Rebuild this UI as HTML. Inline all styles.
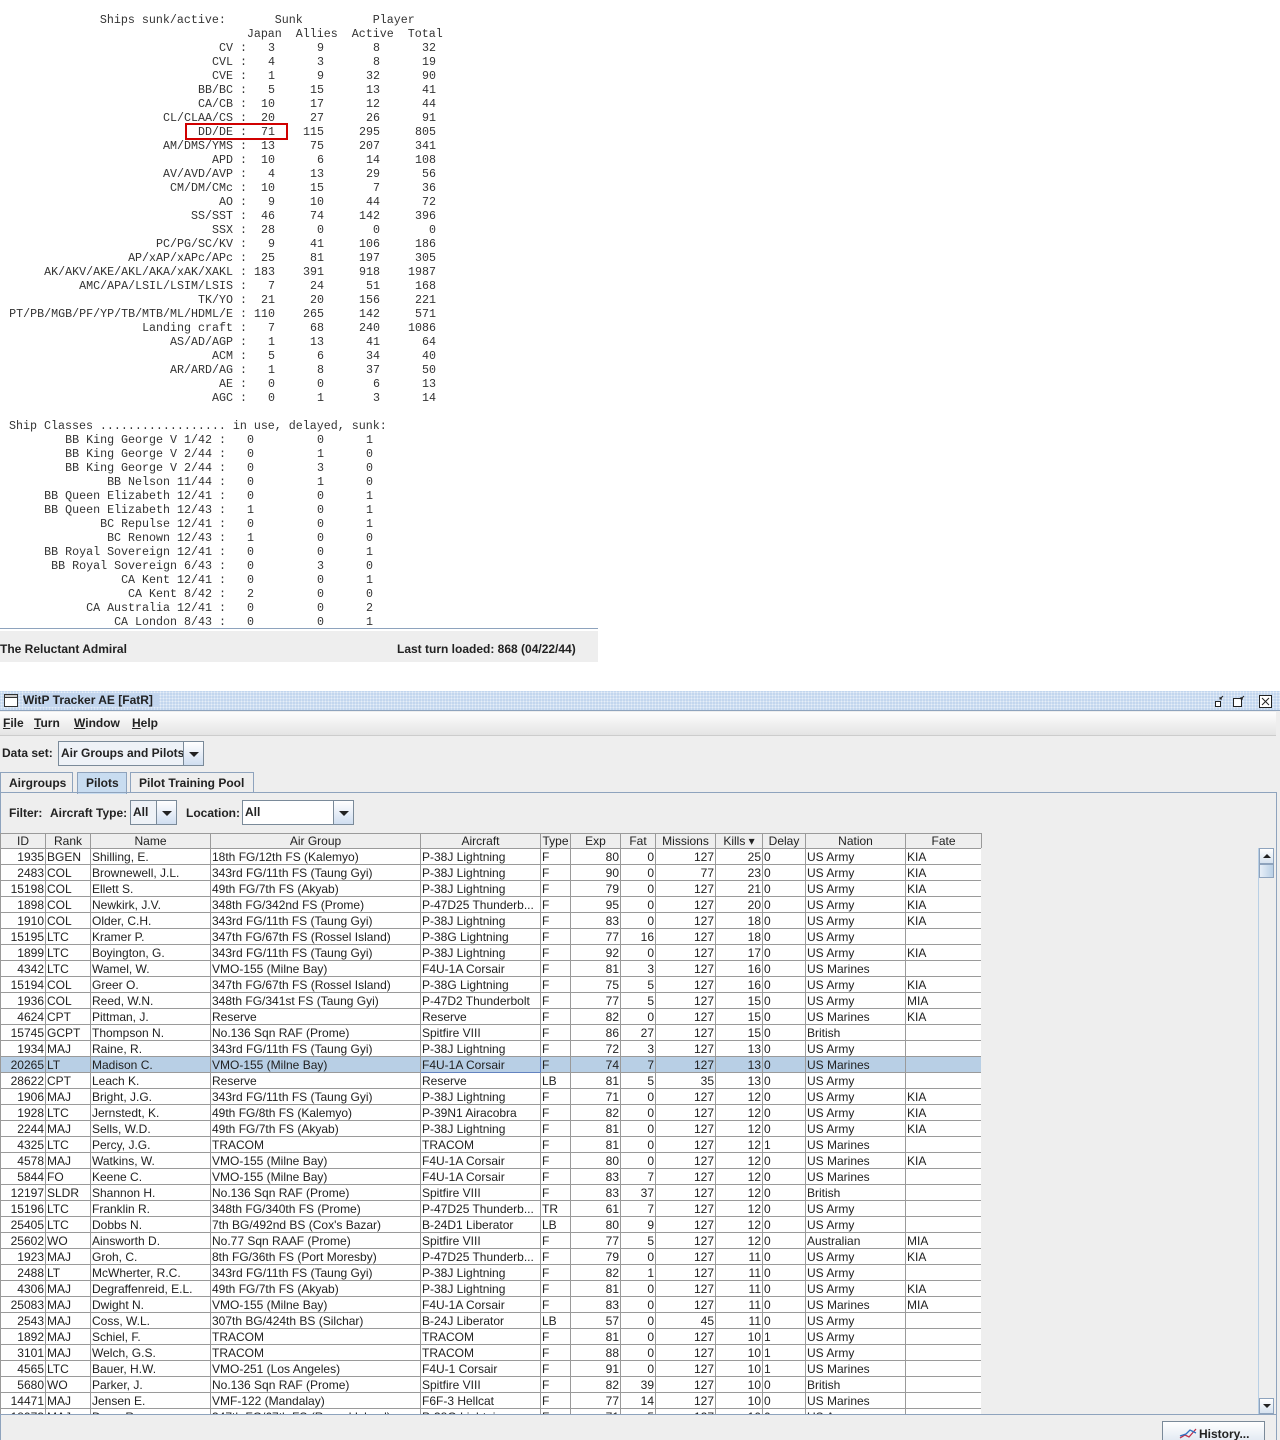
<!DOCTYPE html>
<html><head><meta charset="utf-8">
<style>
*{margin:0;padding:0;box-sizing:border-box}
html,body{width:1280px;height:1440px;overflow:hidden;background:#fff;position:relative}
.mono{font-family:"Liberation Mono",monospace;font-size:11.67px;color:#333;line-height:14px}
#rep{position:absolute;left:9px;top:13px;width:589px;height:615px;overflow:hidden}
.r{height:14px;display:flex;white-space:pre}
.r span{display:block;text-align:right;white-space:pre}
.l{width:224px}.c{width:21px}.j{width:21px}.a{width:49px}.v{width:56px}.t{width:56px}
.l2{width:203px}.c2{width:14px}.n1{width:28px}.n2{width:70px}.n3{width:49px}
#redbox{position:absolute;left:185px;top:123px;width:103px;height:17px;border:2px solid #d00000}
.sf{font-family:"Liberation Sans",Arial,sans-serif}
#status{position:absolute;left:0;top:628px;width:598px;height:34px;background:#eeeeee;border-top:1px solid #8ea3bd;box-shadow:inset 0 2px 0 #fff}
#status b{position:absolute;top:13px;font-size:12px;color:#222}
#win{position:absolute;left:0;top:691px;width:1280px;height:749px;background:#eeeeee}
#title{position:absolute;left:0;top:0;width:1280px;height:20px;border-bottom:1px solid #8ea3bd;
background-color:#c3d6ee;background-image:radial-gradient(#e6eef8 0.8px,transparent 1px);background-size:3px 3px}
#title .tx{position:absolute;left:23px;top:2px;font-weight:bold;font-size:12px;color:#222;background:#c3d6ee;padding-right:6px}
#menu{position:absolute;top:21px;left:0;width:1276px;height:24px;background:linear-gradient(#fdfdfd,#e4e4e4);border-bottom:1px solid #ccc}
#menu span{position:absolute;top:4px;font-size:12px;font-weight:bold;color:#222}
.lab{position:absolute;font-size:12px;font-weight:bold;color:#222}
.combo{position:absolute;height:25px;border:1px solid #7a8a99;background:#eef2f7}
.combo .v{position:absolute;left:2px;top:4px;font-size:12px;font-weight:bold;color:#222;width:auto;text-align:left}
.combo .ar{position:absolute;right:0;top:0;bottom:0;width:20px;border-left:1px solid #7a8a99;background:linear-gradient(#fff,#d0def0)}
.combo .ar:after{content:"";position:absolute;left:5px;top:10px;border-left:5px solid transparent;border-right:5px solid transparent;border-top:5px solid #222}
.tab{position:absolute;top:81px;height:21px;border:1px solid #8ea3bd;border-bottom:none;font-size:12px;font-weight:bold;color:#222;padding:3px 8px 0 8px;background:#eee}
#panel{position:absolute;left:0;top:101px;width:1277px;height:650px;border:1px solid #8ea3bd;border-bottom:none}
#thead{position:absolute;left:0;top:142px;width:981px;height:15px}
#tbody{position:absolute;left:0;top:157px;width:981px;height:566px;overflow:hidden;background:#fff}
table{border-collapse:collapse;table-layout:fixed;width:981px;font-family:"Liberation Sans Narrow","Liberation Sans",Arial,sans-serif;font-size:12px;color:#222}
td,th{border:1px solid #9a9a9a;height:16px;padding:0 1px;white-space:nowrap;overflow:hidden;line-height:14px}
th{font-weight:normal;background:#eeeeee;height:15px}
td.n{text-align:right}
tr.sel td{background:#b8cfe5}
tr.sel td.f{border:1px solid #6382bf}
#sb{position:absolute;left:1258px;top:157px;width:16px;height:566px;background:#eeeeee;border-left:1px solid #b8cfe5}
#hist{position:absolute;left:1162px;top:730px;width:103px;height:24px;border:1px solid #7a8a99;background:linear-gradient(#fff,#dde6f0);font-size:12px;font-weight:bold;color:#222}
</style></head><body>

<div id="rep" class="mono">
<div class="r">             Ships sunk/active:       Sunk          Player</div>
<div class="r">                                  Japan  Allies  Active  Total</div>
<div class="r"><span class="l">CV</span><span class="c"> : </span><span class="j">3</span><span class="a">9</span><span class="v">8</span><span class="t">32</span></div>
<div class="r"><span class="l">CVL</span><span class="c"> : </span><span class="j">4</span><span class="a">3</span><span class="v">8</span><span class="t">19</span></div>
<div class="r"><span class="l">CVE</span><span class="c"> : </span><span class="j">1</span><span class="a">9</span><span class="v">32</span><span class="t">90</span></div>
<div class="r"><span class="l">BB/BC</span><span class="c"> : </span><span class="j">5</span><span class="a">15</span><span class="v">13</span><span class="t">41</span></div>
<div class="r"><span class="l">CA/CB</span><span class="c"> : </span><span class="j">10</span><span class="a">17</span><span class="v">12</span><span class="t">44</span></div>
<div class="r"><span class="l">CL/CLAA/CS</span><span class="c"> : </span><span class="j">20</span><span class="a">27</span><span class="v">26</span><span class="t">91</span></div>
<div class="r"><span class="l">DD/DE</span><span class="c"> : </span><span class="j">71</span><span class="a">115</span><span class="v">295</span><span class="t">805</span></div>
<div class="r"><span class="l">AM/DMS/YMS</span><span class="c"> : </span><span class="j">13</span><span class="a">75</span><span class="v">207</span><span class="t">341</span></div>
<div class="r"><span class="l">APD</span><span class="c"> : </span><span class="j">10</span><span class="a">6</span><span class="v">14</span><span class="t">108</span></div>
<div class="r"><span class="l">AV/AVD/AVP</span><span class="c"> : </span><span class="j">4</span><span class="a">13</span><span class="v">29</span><span class="t">56</span></div>
<div class="r"><span class="l">CM/DM/CMc</span><span class="c"> : </span><span class="j">10</span><span class="a">15</span><span class="v">7</span><span class="t">36</span></div>
<div class="r"><span class="l">AO</span><span class="c"> : </span><span class="j">9</span><span class="a">10</span><span class="v">44</span><span class="t">72</span></div>
<div class="r"><span class="l">SS/SST</span><span class="c"> : </span><span class="j">46</span><span class="a">74</span><span class="v">142</span><span class="t">396</span></div>
<div class="r"><span class="l">SSX</span><span class="c"> : </span><span class="j">28</span><span class="a">0</span><span class="v">0</span><span class="t">0</span></div>
<div class="r"><span class="l">PC/PG/SC/KV</span><span class="c"> : </span><span class="j">9</span><span class="a">41</span><span class="v">106</span><span class="t">186</span></div>
<div class="r"><span class="l">AP/xAP/xAPc/APc</span><span class="c"> : </span><span class="j">25</span><span class="a">81</span><span class="v">197</span><span class="t">305</span></div>
<div class="r"><span class="l">AK/AKV/AKE/AKL/AKA/xAK/XAKL</span><span class="c"> : </span><span class="j">183</span><span class="a">391</span><span class="v">918</span><span class="t">1987</span></div>
<div class="r"><span class="l">AMC/APA/LSIL/LSIM/LSIS</span><span class="c"> : </span><span class="j">7</span><span class="a">24</span><span class="v">51</span><span class="t">168</span></div>
<div class="r"><span class="l">TK/YO</span><span class="c"> : </span><span class="j">21</span><span class="a">20</span><span class="v">156</span><span class="t">221</span></div>
<div class="r"><span class="l">PT/PB/MGB/PF/YP/TB/MTB/ML/HDML/E</span><span class="c"> : </span><span class="j">110</span><span class="a">265</span><span class="v">142</span><span class="t">571</span></div>
<div class="r"><span class="l">Landing craft</span><span class="c"> : </span><span class="j">7</span><span class="a">68</span><span class="v">240</span><span class="t">1086</span></div>
<div class="r"><span class="l">AS/AD/AGP</span><span class="c"> : </span><span class="j">1</span><span class="a">13</span><span class="v">41</span><span class="t">64</span></div>
<div class="r"><span class="l">ACM</span><span class="c"> : </span><span class="j">5</span><span class="a">6</span><span class="v">34</span><span class="t">40</span></div>
<div class="r"><span class="l">AR/ARD/AG</span><span class="c"> : </span><span class="j">1</span><span class="a">8</span><span class="v">37</span><span class="t">50</span></div>
<div class="r"><span class="l">AE</span><span class="c"> : </span><span class="j">0</span><span class="a">0</span><span class="v">6</span><span class="t">13</span></div>
<div class="r"><span class="l">AGC</span><span class="c"> : </span><span class="j">0</span><span class="a">1</span><span class="v">3</span><span class="t">14</span></div>
<div class="r"> </div>
<div class="r">Ship Classes .................. in use, delayed, sunk:</div>
<div class="r"><span class="l2">BB King George V 1/42</span><span class="c2"> :</span><span class="n1">0</span><span class="n2">0</span><span class="n3">1</span></div>
<div class="r"><span class="l2">BB King George V 2/44</span><span class="c2"> :</span><span class="n1">0</span><span class="n2">1</span><span class="n3">0</span></div>
<div class="r"><span class="l2">BB King George V 2/44</span><span class="c2"> :</span><span class="n1">0</span><span class="n2">3</span><span class="n3">0</span></div>
<div class="r"><span class="l2">BB Nelson 11/44</span><span class="c2"> :</span><span class="n1">0</span><span class="n2">1</span><span class="n3">0</span></div>
<div class="r"><span class="l2">BB Queen Elizabeth 12/41</span><span class="c2"> :</span><span class="n1">0</span><span class="n2">0</span><span class="n3">1</span></div>
<div class="r"><span class="l2">BB Queen Elizabeth 12/43</span><span class="c2"> :</span><span class="n1">1</span><span class="n2">0</span><span class="n3">1</span></div>
<div class="r"><span class="l2">BC Repulse 12/41</span><span class="c2"> :</span><span class="n1">0</span><span class="n2">0</span><span class="n3">1</span></div>
<div class="r"><span class="l2">BC Renown 12/43</span><span class="c2"> :</span><span class="n1">1</span><span class="n2">0</span><span class="n3">0</span></div>
<div class="r"><span class="l2">BB Royal Sovereign 12/41</span><span class="c2"> :</span><span class="n1">0</span><span class="n2">0</span><span class="n3">1</span></div>
<div class="r"><span class="l2">BB Royal Sovereign 6/43</span><span class="c2"> :</span><span class="n1">0</span><span class="n2">3</span><span class="n3">0</span></div>
<div class="r"><span class="l2">CA Kent 12/41</span><span class="c2"> :</span><span class="n1">0</span><span class="n2">0</span><span class="n3">1</span></div>
<div class="r"><span class="l2">CA Kent 8/42</span><span class="c2"> :</span><span class="n1">2</span><span class="n2">0</span><span class="n3">0</span></div>
<div class="r"><span class="l2">CA Australia 12/41</span><span class="c2"> :</span><span class="n1">0</span><span class="n2">0</span><span class="n3">2</span></div>
<div class="r"><span class="l2">CA London 8/43</span><span class="c2"> :</span><span class="n1">0</span><span class="n2">0</span><span class="n3">1</span></div>
</div>
<div id="redbox"></div>

<div id="status" class="sf"><b style="left:0">The Reluctant Admiral</b><b style="left:397px">Last turn loaded: 868 (04/22/44)</b></div>

<div id="win" class="sf">
 <div id="title">
  <svg style="position:absolute;left:4px;top:3px" width="15" height="14"><rect x="0.5" y="0.5" width="13" height="12" fill="#fff" stroke="#333"/><rect x="0.5" y="0.5" width="13" height="3" fill="#ccc" stroke="#333"/></svg>
  <span class="tx">WitP Tracker AE [FatR]</span>
  <svg style="position:absolute;left:1212px;top:3px" width="66" height="15" fill="none" stroke="#222">
   <rect x="3.5" y="7.5" width="5" height="5" fill="#fff"/><path d="M8 5l3-3M8 3v2h2"/>
   <rect x="21.5" y="4.5" width="8" height="8" fill="#fff"/><path d="M29 5l3-3M29 3v2h2"/>
   <rect x="47.5" y="1.5" width="12" height="12" fill="#fff"/><path d="M50 4l7 7M57 4l-7 7"/>
  </svg>
 </div>
 <div id="menu"><span style="left:3px"><u>F</u>ile</span><span style="left:34px"><u>T</u>urn</span><span style="left:74px"><u>W</u>indow</span><span style="left:132px"><u>H</u>elp</span></div>
 <span class="lab" style="left:2px;top:55px">Data set:</span>
 <div class="combo" style="left:58px;top:50px;width:146px"><span class="v">Air Groups and Pilots</span><span class="ar"></span></div>
 <div class="tab" style="left:0;width:73px">Airgroups</div>
 <div class="tab" style="left:77px;width:50px;background:#c8dcf0;height:22px">Pilots</div>
 <div class="tab" style="left:130px;width:124px">Pilot Training Pool</div>
 <div id="panel"></div>
 <span class="lab" style="left:9px;top:115px">Filter:</span>
 <span class="lab" style="left:50px;top:115px">Aircraft Type:</span>
 <div class="combo" style="left:130px;top:109px;width:47px"><span class="v">All</span><span class="ar"></span></div>
 <span class="lab" style="left:186px;top:115px">Location:</span>
 <div class="combo" style="left:242px;top:109px;width:112px;background:#fff"><span class="v">All</span><span class="ar"></span></div>

 <div id="thead"><table><colgroup><col style="width:45px"><col style="width:45px"><col style="width:120px"><col style="width:210px"><col style="width:120px"><col style="width:30px"><col style="width:50px"><col style="width:35px"><col style="width:60px"><col style="width:47px"><col style="width:43px"><col style="width:100px"><col style="width:76px"></colgroup>
 <tr><th>ID</th><th>Rank</th><th>Name</th><th>Air Group</th><th>Aircraft</th><th>Type</th><th>Exp</th><th>Fat</th><th>Missions</th><th>Kills &#9662;</th><th>Delay</th><th>Nation</th><th>Fate</th></tr></table></div>

 <div id="tbody"><table><colgroup><col style="width:45px"><col style="width:45px"><col style="width:120px"><col style="width:210px"><col style="width:120px"><col style="width:30px"><col style="width:50px"><col style="width:35px"><col style="width:60px"><col style="width:47px"><col style="width:43px"><col style="width:100px"><col style="width:76px"></colgroup>
<tr><td class="n">1935</td><td>BGEN</td><td>Shilling, E.</td><td>18th FG/12th FS (Kalemyo)</td><td>P-38J Lightning</td><td>F</td><td class="n">80</td><td class="n">0</td><td class="n">127</td><td class="n">25</td><td>0</td><td>US Army</td><td>KIA</td></tr>
<tr><td class="n">2483</td><td>COL</td><td>Brownewell, J.L.</td><td>343rd FG/11th FS (Taung Gyi)</td><td>P-38J Lightning</td><td>F</td><td class="n">90</td><td class="n">0</td><td class="n">77</td><td class="n">23</td><td>0</td><td>US Army</td><td>KIA</td></tr>
<tr><td class="n">15198</td><td>COL</td><td>Ellett S.</td><td>49th FG/7th FS (Akyab)</td><td>P-38J Lightning</td><td>F</td><td class="n">79</td><td class="n">0</td><td class="n">127</td><td class="n">21</td><td>0</td><td>US Army</td><td>KIA</td></tr>
<tr><td class="n">1898</td><td>COL</td><td>Newkirk, J.V.</td><td>348th FG/342nd FS (Prome)</td><td>P-47D25 Thunderb...</td><td>F</td><td class="n">95</td><td class="n">0</td><td class="n">127</td><td class="n">20</td><td>0</td><td>US Army</td><td>KIA</td></tr>
<tr><td class="n">1910</td><td>COL</td><td>Older, C.H.</td><td>343rd FG/11th FS (Taung Gyi)</td><td>P-38J Lightning</td><td>F</td><td class="n">83</td><td class="n">0</td><td class="n">127</td><td class="n">18</td><td>0</td><td>US Army</td><td>KIA</td></tr>
<tr><td class="n">15195</td><td>LTC</td><td>Kramer P.</td><td>347th FG/67th FS (Rossel Island)</td><td>P-38G Lightning</td><td>F</td><td class="n">77</td><td class="n">16</td><td class="n">127</td><td class="n">18</td><td>0</td><td>US Army</td><td></td></tr>
<tr><td class="n">1899</td><td>LTC</td><td>Boyington, G.</td><td>343rd FG/11th FS (Taung Gyi)</td><td>P-38J Lightning</td><td>F</td><td class="n">92</td><td class="n">0</td><td class="n">127</td><td class="n">17</td><td>0</td><td>US Army</td><td>KIA</td></tr>
<tr><td class="n">4342</td><td>LTC</td><td>Wamel, W.</td><td>VMO-155 (Milne Bay)</td><td>F4U-1A Corsair</td><td>F</td><td class="n">81</td><td class="n">3</td><td class="n">127</td><td class="n">16</td><td>0</td><td>US Marines</td><td></td></tr>
<tr><td class="n">15194</td><td>COL</td><td>Greer O.</td><td>347th FG/67th FS (Rossel Island)</td><td>P-38G Lightning</td><td>F</td><td class="n">75</td><td class="n">5</td><td class="n">127</td><td class="n">16</td><td>0</td><td>US Army</td><td>KIA</td></tr>
<tr><td class="n">1936</td><td>COL</td><td>Reed, W.N.</td><td>348th FG/341st FS (Taung Gyi)</td><td>P-47D2 Thunderbolt</td><td>F</td><td class="n">77</td><td class="n">5</td><td class="n">127</td><td class="n">15</td><td>0</td><td>US Army</td><td>MIA</td></tr>
<tr><td class="n">4624</td><td>CPT</td><td>Pittman, J.</td><td>Reserve</td><td>Reserve</td><td>F</td><td class="n">82</td><td class="n">0</td><td class="n">127</td><td class="n">15</td><td>0</td><td>US Marines</td><td>KIA</td></tr>
<tr><td class="n">15745</td><td>GCPT</td><td>Thompson N.</td><td>No.136 Sqn RAF (Prome)</td><td>Spitfire VIII</td><td>F</td><td class="n">86</td><td class="n">27</td><td class="n">127</td><td class="n">15</td><td>0</td><td>British</td><td></td></tr>
<tr><td class="n">1934</td><td>MAJ</td><td>Raine, R.</td><td>343rd FG/11th FS (Taung Gyi)</td><td>P-38J Lightning</td><td>F</td><td class="n">72</td><td class="n">3</td><td class="n">127</td><td class="n">13</td><td>0</td><td>US Army</td><td></td></tr>
<tr class="sel"><td class="n">20265</td><td>LT</td><td>Madison C.</td><td>VMO-155 (Milne Bay)</td><td class="f">F4U-1A Corsair</td><td>F</td><td class="n">74</td><td class="n">7</td><td class="n">127</td><td class="n">13</td><td>0</td><td>US Marines</td><td></td></tr>
<tr><td class="n">28622</td><td>CPT</td><td>Leach K.</td><td>Reserve</td><td>Reserve</td><td>LB</td><td class="n">81</td><td class="n">5</td><td class="n">35</td><td class="n">13</td><td>0</td><td>US Army</td><td></td></tr>
<tr><td class="n">1906</td><td>MAJ</td><td>Bright, J.G.</td><td>343rd FG/11th FS (Taung Gyi)</td><td>P-38J Lightning</td><td>F</td><td class="n">71</td><td class="n">0</td><td class="n">127</td><td class="n">12</td><td>0</td><td>US Army</td><td>KIA</td></tr>
<tr><td class="n">1928</td><td>LTC</td><td>Jernstedt, K.</td><td>49th FG/8th FS (Kalemyo)</td><td>P-39N1 Airacobra</td><td>F</td><td class="n">82</td><td class="n">0</td><td class="n">127</td><td class="n">12</td><td>0</td><td>US Army</td><td>KIA</td></tr>
<tr><td class="n">2244</td><td>MAJ</td><td>Sells, W.D.</td><td>49th FG/7th FS (Akyab)</td><td>P-38J Lightning</td><td>F</td><td class="n">81</td><td class="n">0</td><td class="n">127</td><td class="n">12</td><td>0</td><td>US Army</td><td>KIA</td></tr>
<tr><td class="n">4325</td><td>LTC</td><td>Percy, J.G.</td><td>TRACOM</td><td>TRACOM</td><td>F</td><td class="n">81</td><td class="n">0</td><td class="n">127</td><td class="n">12</td><td>1</td><td>US Marines</td><td></td></tr>
<tr><td class="n">4578</td><td>MAJ</td><td>Watkins, W.</td><td>VMO-155 (Milne Bay)</td><td>F4U-1A Corsair</td><td>F</td><td class="n">80</td><td class="n">0</td><td class="n">127</td><td class="n">12</td><td>0</td><td>US Marines</td><td>KIA</td></tr>
<tr><td class="n">5844</td><td>FO</td><td>Keene C.</td><td>VMO-155 (Milne Bay)</td><td>F4U-1A Corsair</td><td>F</td><td class="n">83</td><td class="n">7</td><td class="n">127</td><td class="n">12</td><td>0</td><td>US Marines</td><td></td></tr>
<tr><td class="n">12197</td><td>SLDR</td><td>Shannon H.</td><td>No.136 Sqn RAF (Prome)</td><td>Spitfire VIII</td><td>F</td><td class="n">83</td><td class="n">37</td><td class="n">127</td><td class="n">12</td><td>0</td><td>British</td><td></td></tr>
<tr><td class="n">15196</td><td>LTC</td><td>Franklin R.</td><td>348th FG/340th FS (Prome)</td><td>P-47D25 Thunderb...</td><td>TR</td><td class="n">61</td><td class="n">7</td><td class="n">127</td><td class="n">12</td><td>0</td><td>US Army</td><td></td></tr>
<tr><td class="n">25405</td><td>LTC</td><td>Dobbs N.</td><td>7th BG/492nd BS (Cox's Bazar)</td><td>B-24D1 Liberator</td><td>LB</td><td class="n">80</td><td class="n">9</td><td class="n">127</td><td class="n">12</td><td>0</td><td>US Army</td><td></td></tr>
<tr><td class="n">25602</td><td>WO</td><td>Ainsworth D.</td><td>No.77 Sqn RAAF (Prome)</td><td>Spitfire VIII</td><td>F</td><td class="n">77</td><td class="n">5</td><td class="n">127</td><td class="n">12</td><td>0</td><td>Australian</td><td>MIA</td></tr>
<tr><td class="n">1923</td><td>MAJ</td><td>Groh, C.</td><td>8th FG/36th FS (Port Moresby)</td><td>P-47D25 Thunderb...</td><td>F</td><td class="n">79</td><td class="n">0</td><td class="n">127</td><td class="n">11</td><td>0</td><td>US Army</td><td>KIA</td></tr>
<tr><td class="n">2488</td><td>LT</td><td>McWherter, R.C.</td><td>343rd FG/11th FS (Taung Gyi)</td><td>P-38J Lightning</td><td>F</td><td class="n">82</td><td class="n">1</td><td class="n">127</td><td class="n">11</td><td>0</td><td>US Army</td><td></td></tr>
<tr><td class="n">4306</td><td>MAJ</td><td>Degraffenreid, E.L.</td><td>49th FG/7th FS (Akyab)</td><td>P-38J Lightning</td><td>F</td><td class="n">81</td><td class="n">0</td><td class="n">127</td><td class="n">11</td><td>0</td><td>US Army</td><td>KIA</td></tr>
<tr><td class="n">25083</td><td>MAJ</td><td>Dwight N.</td><td>VMO-155 (Milne Bay)</td><td>F4U-1A Corsair</td><td>F</td><td class="n">83</td><td class="n">0</td><td class="n">127</td><td class="n">11</td><td>0</td><td>US Marines</td><td>MIA</td></tr>
<tr><td class="n">2543</td><td>MAJ</td><td>Coss, W.L.</td><td>307th BG/424th BS (Silchar)</td><td>B-24J Liberator</td><td>LB</td><td class="n">57</td><td class="n">0</td><td class="n">45</td><td class="n">11</td><td>0</td><td>US Army</td><td></td></tr>
<tr><td class="n">1892</td><td>MAJ</td><td>Schiel, F.</td><td>TRACOM</td><td>TRACOM</td><td>F</td><td class="n">81</td><td class="n">0</td><td class="n">127</td><td class="n">10</td><td>1</td><td>US Army</td><td></td></tr>
<tr><td class="n">3101</td><td>MAJ</td><td>Welch, G.S.</td><td>TRACOM</td><td>TRACOM</td><td>F</td><td class="n">88</td><td class="n">0</td><td class="n">127</td><td class="n">10</td><td>1</td><td>US Army</td><td></td></tr>
<tr><td class="n">4565</td><td>LTC</td><td>Bauer, H.W.</td><td>VMO-251 (Los Angeles)</td><td>F4U-1 Corsair</td><td>F</td><td class="n">91</td><td class="n">0</td><td class="n">127</td><td class="n">10</td><td>1</td><td>US Marines</td><td></td></tr>
<tr><td class="n">5680</td><td>WO</td><td>Parker, J.</td><td>No.136 Sqn RAF (Prome)</td><td>Spitfire VIII</td><td>F</td><td class="n">82</td><td class="n">39</td><td class="n">127</td><td class="n">10</td><td>0</td><td>British</td><td></td></tr>
<tr><td class="n">14471</td><td>MAJ</td><td>Jensen E.</td><td>VMF-122 (Mandalay)</td><td>F6F-3 Hellcat</td><td>F</td><td class="n">77</td><td class="n">14</td><td class="n">127</td><td class="n">10</td><td>0</td><td>US Marines</td><td></td></tr>
<tr><td class="n">18973</td><td>MAJ</td><td>Drere R.</td><td>347th FG/67th FS (Rossel Island)</td><td>P-38G Lightning</td><td>F</td><td class="n">71</td><td class="n">5</td><td class="n">127</td><td class="n">10</td><td>0</td><td>US Army</td><td></td></tr>
 </table></div>
 <div style="position:absolute;left:981px;top:157px;width:277px;height:566px;background:#eeeeee"></div>
 <div style="position:absolute;left:0;top:723px;width:1276px;height:1px;background:#8ea3bd"></div>
 <div id="sb">
  <div style="position:absolute;left:0;top:0;width:15px;height:16px;background:linear-gradient(#fff,#d6e2ef);border:1px solid #8ea3bd"><div style="position:absolute;left:3px;top:5px;border-left:4px solid transparent;border-right:4px solid transparent;border-bottom:4px solid #222"></div></div>
  <div style="position:absolute;left:0;top:16px;width:15px;height:14px;background:linear-gradient(90deg,#e8eff8,#b8cfe5);border:1px solid #8ea3bd"></div>
  <div style="position:absolute;left:0;bottom:0;width:15px;height:16px;background:linear-gradient(#fff,#d6e2ef);border:1px solid #8ea3bd"><div style="position:absolute;left:3px;top:5px;border-left:4px solid transparent;border-right:4px solid transparent;border-top:4px solid #222"></div></div>
 </div>
 <div id="hist"><svg style="position:absolute;left:16px;top:6px" width="18" height="12" fill="none" stroke-width="1.3"><path d="M1 10l5-3 4 2 7-8" stroke="#c0304a"/><path d="M1 8l6-2 4-4 6 3" stroke="#3070c0"/></svg><span style="position:absolute;left:36px;top:5px">History...</span></div>
</div>
</body></html>
